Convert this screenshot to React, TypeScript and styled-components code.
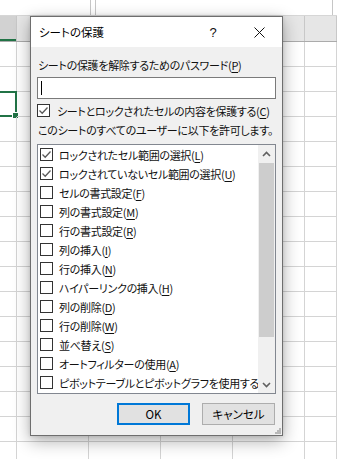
import React from 'react';
import styled, { createGlobalStyle } from 'styled-components';

const GlobalStyle = createGlobalStyle`
  html, body {
    margin: 0;
    padding: 0;
    background: #ffffff;
  }
  body {
    font-family: "Noto Sans CJK JP", "Noto Sans", sans-serif;
    font-feature-settings: "palt" 1;
    color: #000000;
  }
`;

const COLS = 6;
const ROWS = 17;

const Screen = styled.div`
  position: relative;
  width: 337px;
  height: 459px;
  overflow: hidden;
  background: #ffffff;
`;

const FormulaStrip = styled.div`
  height: 16px;
  display: grid;
  grid-template-columns: 91px 5px 237px 1fr;
  border-bottom: 1px solid #d6d6d6;
  box-sizing: border-box;
`;

const StripPart = styled.div<{ $line?: boolean }>`
  border-right: ${(p) => (p.$line ? '1px solid #c6c6c6' : 'none')};
`;

const ColumnHeader = styled.div`
  height: 25px;
  display: grid;
  grid-template-columns: 17px repeat(4, 72px) 1fr;
  background: #e6e6e6;
  border-bottom: 1px solid #ababab;
`;

const HeaderCell = styled.div<{ $active?: boolean }>`
  border-right: 1px solid #c8c8c8;
  background: ${(p) => (p.$active ? '#d2d2d2' : 'transparent')};
  box-shadow: ${(p) => (p.$active ? 'inset 0 -2px 0 #217346' : 'none')};
`;

const CellGrid = styled.div`
  display: grid;
  grid-template-columns: 17px repeat(4, 72px) 1fr;
  grid-auto-rows: 25px;
`;

const Cell = styled.div<{ $selected?: boolean }>`
  position: relative;
  box-sizing: border-box;
  border-right: 1px solid #d4d4d4;
  border-bottom: 1px solid #d4d4d4;
  ${(p) =>
    p.$selected &&
    `
    border: 2px solid #217346;
    border-left: none;
    margin-top: -1px;
    height: 26px;
  `}
`;

const FillHandle = styled.span`
  position: absolute;
  right: -4px;
  bottom: -4px;
  width: 5px;
  height: 5px;
  background: #217346;
  border: 1px solid #ffffff;
`;

const Dialog = styled.div`
  position: absolute;
  left: 30px;
  top: 16px;
  width: 253px;
  height: 420px;
  box-sizing: border-box;
  border: 1px solid #6e6e6e;
  background: #f0f0f0;
  box-shadow: 0 5px 16px rgba(0, 0, 0, 0.32), 0 0 4px rgba(0, 0, 0, 0.12);
  display: flex;
  flex-direction: column;
`;

const TitleBar = styled.div`
  height: 30px;
  background: #ffffff;
  display: flex;
  align-items: center;
  padding-left: 8px;
`;

const TitleText = styled.div`
  flex: 1;
  font-size: 11.5px;
  color: #000;
`;

const TitleButton = styled.div`
  width: 46px;
  height: 30px;
  display: flex;
  align-items: center;
  justify-content: center;
  font-family: "Liberation Sans", sans-serif;
  font-size: 13px;
  color: #111;
`;

const Body = styled.div`
  flex: 1;
  display: flex;
  flex-direction: column;
  padding: 0 6px;
  font-size: 11px;
  letter-spacing: -0.3px;
  line-height: 16px;
  color: #111;
`;

const Label = styled.div<{ $mt: number }>`
  margin-top: ${(p) => p.$mt}px;
  padding-left: 1px;
  white-space: nowrap;
`;

const PasswordBox = styled.div`
  margin-top: 4px;
  height: 22px;
  box-sizing: border-box;
  background: #ffffff;
  border: 1px solid #7a7a7a;
  display: flex;
  align-items: center;
  padding-left: 3px;
`;

const Caret = styled.span`
  width: 1px;
  height: 14px;
  background: #000;
`;

const CheckRow = styled.label<{ $mt?: number }>`
  display: flex;
  align-items: center;
  gap: 7px;
  height: 19px;
  margin-top: ${(p) => p.$mt ?? 0}px;
  white-space: nowrap;
`;

const Box = styled.span`
  flex: none;
  width: 13px;
  height: 13px;
  box-sizing: border-box;
  border: 1px solid #333333;
  background: #ffffff;
  display: flex;
  align-items: center;
  justify-content: center;
`;

const Key = styled.span`
  text-decoration: underline;
  text-underline-offset: 2px;
`;

const ListBox = styled.div`
  margin-top: 6px;
  height: 250px;
  box-sizing: border-box;
  border: 1px solid #828790;
  background: #ffffff;
  display: flex;
`;

const ListItems = styled.div`
  flex: 1;
  overflow: hidden;
  padding-left: 2px;
`;

const ListRow = styled(CheckRow)`
  gap: 6px;
`;

const ScrollBar = styled.div`
  width: 17px;
  background: #f0f0f0;
  display: flex;
  flex-direction: column;
`;

const ScrollArrow = styled.div`
  height: 17px;
  display: flex;
  align-items: center;
  justify-content: center;
`;

const ScrollTrack = styled.div`
  flex: 1;
  padding: 1px 1px;
  display: flex;
  flex-direction: column;
`;

const Thumb = styled.div`
  height: 174px;
  background: #cdcdcd;
`;

const Footer = styled.div`
  margin-top: 9px;
  display: flex;
  justify-content: flex-end;
  gap: 12px;
  padding-right: 1px;
`;

const Button = styled.button<{ $primary?: boolean }>`
  width: 73px;
  height: 22px;
  box-sizing: border-box;
  background: #e1e1e1;
  border: ${(p) => (p.$primary ? '2px solid #0078d7' : '1px solid #adadad')};
  font-family: "Noto Sans CJK JP", sans-serif;
  font-feature-settings: "palt" 1;
  font-size: 11.5px;
  color: #000;
  padding: 0;
  display: flex;
  align-items: center;
  justify-content: center;
`;

const Grip = styled.svg`
  position: absolute;
  right: 1px;
  bottom: 1px;
`;

const Check = () => (
  <svg width="11" height="11" viewBox="0 0 11 11">
    <polyline points="1.5,5.5 4.2,8.2 9.5,2.5" fill="none" stroke="#5a5a5a" strokeWidth="1.3" />
  </svg>
);

const Chevron = ({ up }: { up?: boolean }) => (
  <svg width="9" height="6" viewBox="0 0 9 6">
    <polyline
      points={up ? '1,5 4.5,1.5 8,5' : '1,1 4.5,4.5 8,1'}
      fill="none"
      stroke="#606060"
      strokeWidth="1.6"
    />
  </svg>
);

const withKey = (text: string, key?: string) =>
  key ? (
    <span>
      {text}(<Key>{key}</Key>)
    </span>
  ) : (
    <span>{text}</span>
  );

const items: { text: string; key?: string; checked?: boolean }[] = [
  { text: 'ロックされたセル範囲の選択', key: 'L', checked: true },
  { text: 'ロックされていないセル範囲の選択', key: 'U', checked: true },
  { text: 'セルの書式設定', key: 'F' },
  { text: '列の書式設定', key: 'M' },
  { text: '行の書式設定', key: 'R' },
  { text: '列の挿入', key: 'I' },
  { text: '行の挿入', key: 'N' },
  { text: 'ハイパーリンクの挿入', key: 'H' },
  { text: '列の削除', key: 'D' },
  { text: '行の削除', key: 'W' },
  { text: '並べ替え', key: 'S' },
  { text: 'オートフィルターの使用', key: 'A' },
  { text: 'ピボットテーブルとピボットグラフを使用する' },
];

export default function App() {
  return (
    <Screen>
      <GlobalStyle />
      <FormulaStrip>
        <StripPart $line />
        <StripPart $line />
        <StripPart $line />
        <StripPart />
      </FormulaStrip>
      <ColumnHeader>
        {Array.from({ length: COLS }).map((_, i) => (
          <HeaderCell key={i} $active={i === 0} />
        ))}
      </ColumnHeader>
      <CellGrid>
        {Array.from({ length: ROWS * COLS }).map((_, i) => {
          const selected = i === 2 * COLS;
          return (
            <Cell key={i} $selected={selected}>
              {selected && <FillHandle />}
            </Cell>
          );
        })}
      </CellGrid>

      <Dialog>
        <TitleBar>
          <TitleText>シートの保護</TitleText>
          <TitleButton>?</TitleButton>
          <TitleButton>
            <svg width="11" height="11" viewBox="0 0 11 11">
              <path d="M0.5 0.5 L10.5 10.5 M10.5 0.5 L0.5 10.5" stroke="#111" strokeWidth="1" />
            </svg>
          </TitleButton>
        </TitleBar>
        <Body>
          <Label $mt={10}>{withKey('シートの保護を解除するためのパスワード', 'P')}</Label>
          <PasswordBox>
            <Caret />
          </PasswordBox>
          <CheckRow $mt={2}>
            <Box>
              <Check />
            </Box>
            {withKey('シートとロックされたセルの内容を保護する', 'C')}
          </CheckRow>
          <Label $mt={2}>このシートのすべてのユーザーに以下を許可します。</Label>
          <ListBox>
            <ListItems>
              {items.map((it) => (
                <ListRow key={it.text}>
                  <Box>{it.checked && <Check />}</Box>
                  {withKey(it.text, it.key)}
                </ListRow>
              ))}
            </ListItems>
            <ScrollBar>
              <ScrollArrow>
                <Chevron up />
              </ScrollArrow>
              <ScrollTrack>
                <Thumb />
              </ScrollTrack>
              <ScrollArrow>
                <Chevron />
              </ScrollArrow>
            </ScrollBar>
          </ListBox>
          <Footer>
            <Button $primary>OK</Button>
            <Button>キャンセル</Button>
          </Footer>
        </Body>
        <Grip width="6" height="6" viewBox="0 0 6 6">
          <rect x="4" y="0" width="2" height="2" fill="#b8b8b8" />
          <rect x="2" y="2" width="2" height="2" fill="#b8b8b8" />
          <rect x="4" y="2" width="2" height="2" fill="#b8b8b8" />
          <rect x="0" y="4" width="2" height="2" fill="#b8b8b8" />
          <rect x="2" y="4" width="2" height="2" fill="#b8b8b8" />
          <rect x="4" y="4" width="2" height="2" fill="#b8b8b8" />
        </Grip>
      </Dialog>
    </Screen>
  );
}
